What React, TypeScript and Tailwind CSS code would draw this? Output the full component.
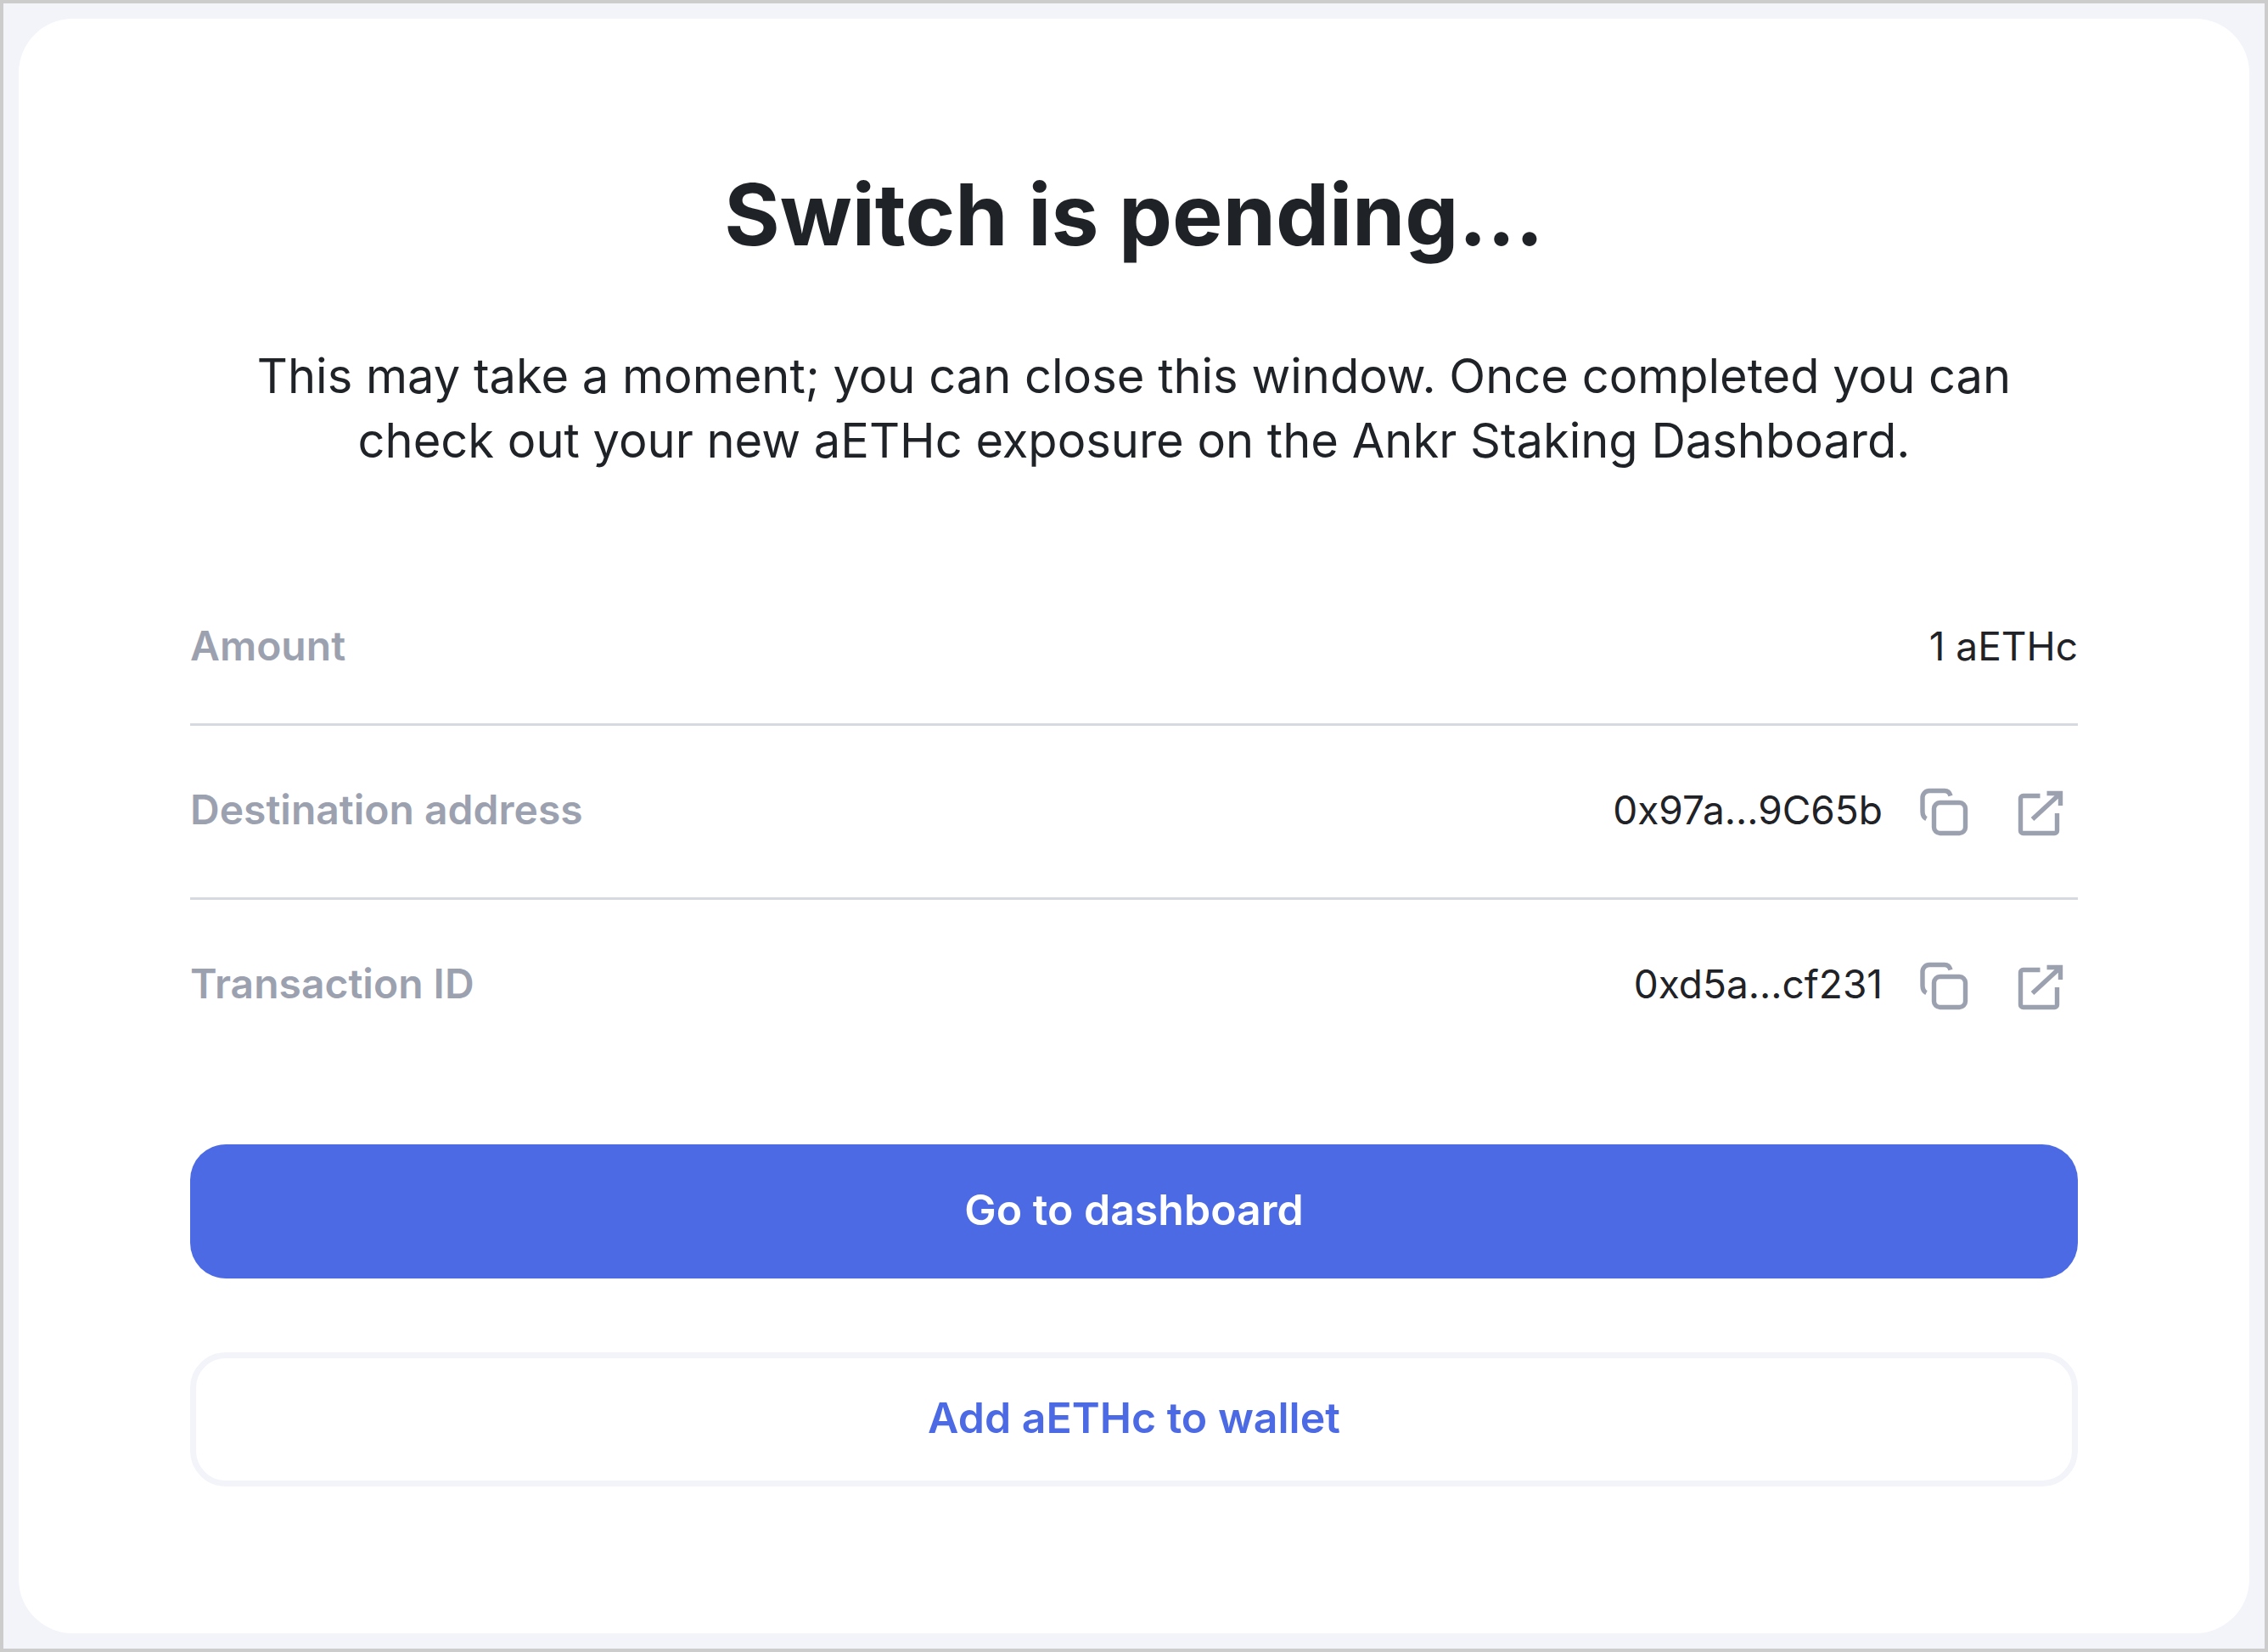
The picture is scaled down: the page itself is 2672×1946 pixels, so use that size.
import type { ReactNode } from "react";

function CopyIcon() {
  return (
    <svg viewBox="0 0 60 60" className="size-15" fill="none" stroke="currentColor" strokeWidth="5.4" aria-hidden="true">
      <path d="M38 11.500C37 7.800 34.500 5.500 31 5.500H13a8 8 0 0 0-8 8V30c0 4 1.500 7 4.500 8.500" />
      <rect x="18.500" y="19.500" width="37" height="36" rx="7" />
    </svg>
  );
}

function ExternalIcon() {
  return (
    <svg viewBox="0 0 60 60" className="size-15" fill="none" stroke="currentColor" strokeWidth="5.4" aria-hidden="true">
      <path d="M29.500 11.500H9.500a3 3 0 0 0-3 3V52.500a3 3 0 0 0 3 3H46.500a3 3 0 0 0 3-3V32" />
      <path d="M37.500 8.500H53.500V23M20.500 39L53 9" />
    </svg>
  );
}

function Row({ label, children }: { label: string; children: ReactNode }) {
  return (
    <div className="flex items-center justify-between border-b-3 border-[#d7d9e0] py-[57px] first:pt-0 last:border-b-0 last:pb-0">
      <dt className="pb-1 text-[48px] font-semibold text-[#9ca1b0]">{label}</dt>
      <dd className="flex items-center">{children}</dd>
    </div>
  );
}

function HashValue({ value, name }: { value: string; name: string }) {
  return (
    <>
      <span className="pb-1">{value}</span>
      <button type="button" aria-label={`Copy ${name}`} className="ml-7 p-3.5 text-[#9ca1b0]">
        <CopyIcon />
      </button>
      <a href="#explorer" aria-label={`Open ${name} in explorer`} className="ml-6.5 p-3.5 text-[#9ca1b0]">
        <ExternalIcon />
      </a>
    </>
  );
}

export default function App() {
  return (
    <div className="flex min-h-screen border-4 border-[#cccccc] bg-[#f3f4fa] p-[18px] font-['Inter',sans-serif] text-[#1f2226]">
      <main className="flex-1 rounded-[64px] bg-white px-[202px] pt-[171px] pb-[160px]">
        <h1 className="text-center text-[100px] leading-[120px] font-bold">Switch is pending...</h1>
        <p className="mx-auto mt-[92px] max-w-[2140px] text-center text-[56px] leading-[76px]">
          This may take a moment; you can close this window. Once completed you can check out your new aETHc exposure on
          the Ankr Staking Dashboard.
        </p>
        <dl className="mt-[174px] text-[46px] leading-[60px]">
          <Row label="Amount">
            <span className="pb-1">1 aETHc</span>
          </Row>
          <Row label="Destination address">
            <HashValue value="0x97a...9C65b" name="destination address" />
          </Row>
          <Row label="Transaction ID">
            <HashValue value="0xd5a...cf231" name="transaction ID" />
          </Row>
        </dl>
        <button
          type="button"
          className="mt-[143px] block h-[158px] w-full rounded-[42px] bg-[#4c6ae3] pb-1 text-[50px] font-semibold text-white"
        >
          Go to dashboard
        </button>
        <button
          type="button"
          className="mt-[87px] block h-[158px] w-full rounded-[42px] border-[7px] border-[#f3f4fa] bg-white pb-1 text-[50px] font-semibold text-[#4c6ae3]"
        >
          Add aETHc to wallet
        </button>
      </main>
    </div>
  );
}
